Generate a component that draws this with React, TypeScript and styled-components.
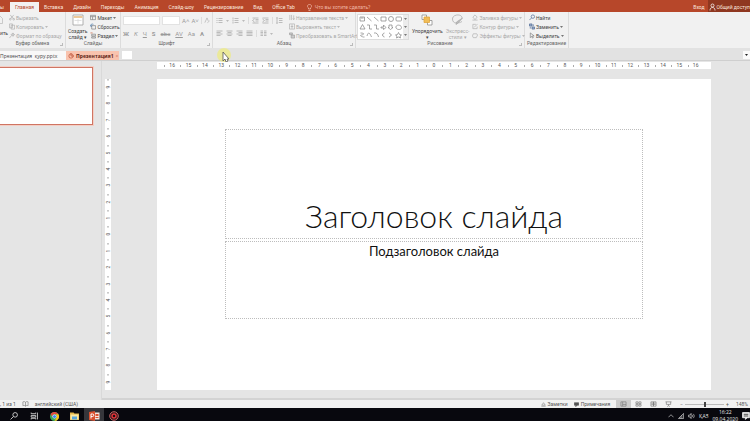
import React from "react";
import styled, { createGlobalStyle } from "styled-components";

const Global = createGlobalStyle`
  * { box-sizing: border-box; }
  html, body { margin: 0; height: 100%; overflow: hidden; }
  body { font-family: Roboto, "Open Sans", sans-serif; font-size: 5px; line-height: 8px; color: #444; }
  button, input, select { font: inherit; color: inherit; margin: 0; padding: 0; border: 0; background: none; border-radius: 0; appearance: none; }
  button { display: flex; align-items: center; white-space: nowrap; }
  svg { display: block; flex: none; }
`;

const Window = styled.div`
  display: flex;
  flex-direction: column;
  height: 100vh;
  overflow: hidden;
  background: #e5e5e5;
`;

/* ---------- Tab strip ---------- */
const TabStrip = styled.nav`
  display: flex;
  align-items: flex-end;
  height: 12px;
  background: #b7472a;
  color: #fbe6df;
  flex: none;
`;
const RibbonTab = styled.button<{ $active?: boolean }>`
  height: 10px;
  padding: 0 5px;
  background: ${(p) => (p.$active ? "#f3f1f0" : "transparent")};
  color: ${(p) => (p.$active ? "#b7472a" : "#fbe6df")};
`;
const FileTab = styled(RibbonTab)`
  width: 10px;
  padding: 0;
`;
const TellMe = styled(RibbonTab)`
  gap: 3px;
  margin-left: 2px;
  color: #efb5a4;
`;
const Account = styled.div`
  display: flex;
  align-items: stretch;
  height: 12px;
  margin-left: auto;
`;
const SignIn = styled.button`
  padding: 2px 3px 0;
`;
const Share = styled.button`
  min-width: 40px;
  gap: 1px;
  padding: 2px 0 0 1px;
  background: #8f3720;
`;

/* ---------- Ribbon ---------- */
const Ribbon = styled.div`
  display: flex;
  height: 36px;
  background: #f1f1f1;
  flex: none;
`;
const Group = styled.section<{ $w: number }>`
  display: flex;
  flex-direction: column;
  flex: none;
  width: ${(p) => p.$w}px;
  border-right: 1px solid #dcdcdc;
`;
const GroupBody = styled.div<{ $gap?: number; $pad?: number }>`
  display: flex;
  flex: 1;
  gap: ${(p) => p.$gap ?? 0}px;
  padding-left: ${(p) => p.$pad ?? 0}px;
`;
const GroupFooter = styled.div`
  position: relative;
  height: 8px;
  line-height: 7px;
  text-align: center;
  color: #666;
`;
const Launcher = styled.span`
  position: absolute;
  right: 2px;
  bottom: 2px;
  width: 3px;
  height: 3px;
  border: solid #bbb;
  border-width: 0 1px 1px 0;
`;
const Stack = styled.div`
  display: flex;
  flex-direction: column;
  padding-top: 1px;
`;
const Command = styled.button<{ $dim?: boolean }>`
  height: 9px;
  gap: 1px;
  color: ${(p) => (p.$dim ? "#a9a9a9" : "#444")};
`;
const BigCommand = styled.button<{ $dim?: boolean }>`
  flex-direction: column;
  justify-content: flex-start;
  gap: 2px;
  padding-top: 2px;
  line-height: 6px;
  white-space: pre-line;
  text-align: center;
  color: ${(p) => (p.$dim ? "#a9a9a9" : "#444")};
`;
const PasteEnd = styled(BigCommand)`
  width: 9px;
  align-items: flex-start;
`;
const Row = styled.div<{ $gap: number; $top?: number }>`
  display: flex;
  align-items: center;
  gap: ${(p) => p.$gap}px;
  height: 9px;
  margin-top: ${(p) => p.$top ?? 0}px;
`;
const FontSelect = styled.select<{ $w: number }>`
  width: ${(p) => p.$w}px;
  height: 9px;
  background: #fff;
  border: 1px solid #e2e2e2;
`;
const Glyph = styled.button<{ $b?: boolean; $i?: boolean; $u?: boolean; $s?: boolean }>`
  height: 9px;
  font-size: 6px;
  color: #9a9a9a;
  font-weight: ${(p) => (p.$b ? 700 : 400)};
  font-style: ${(p) => (p.$i ? "italic" : "normal")};
  text-decoration: ${(p) => (p.$u ? "underline" : p.$s ? "line-through" : "none")};
`;
const Divider = styled.span`
  width: 1px;
  height: 7px;
  background: #dcdcdc;
`;
const Gallery = styled.div`
  display: flex;
  width: 53px;
  height: 26px;
  margin-top: 2px;
  background: #fff;
  border: 1px solid #dcdcdc;
`;
const GalleryScroll = styled.div`
  display: flex;
  flex-direction: column;
  justify-content: space-around;
  align-items: center;
  width: 5px;
  margin-left: auto;
  background: #ececec;
`;

/* ---------- Document tabs ---------- */
const DocTabs = styled.div`
  display: flex;
  align-items: flex-end;
  height: 13px;
  background: #e2e2e2;
  border-bottom: 1px solid #cfcfcf;
  font-family: "Open Sans", sans-serif;
  flex: none;
`;
const DocTab = styled.button<{ $active?: boolean }>`
  height: 9px;
  width: ${(p) => (p.$active ? 53 : 66)}px;
  gap: 2px;
  padding-left: ${(p) => (p.$active ? 2 : 0)}px;
  font-weight: ${(p) => (p.$active ? 700 : 400)};
  background: ${(p) => (p.$active ? "#f9c3ae" : "#f8f8f8")};
  color: ${(p) => (p.$active ? "#5e2415" : "#444")};
`;
const CloseMark = styled.span`
  margin: 0 2px 0 auto;
  font-weight: 400;
  color: #d27055;
`;
const NewTab = styled.button`
  width: 10px;
  height: 8px;
  margin: 0 auto 1px 3px;
  background: #fff;
`;
const TabMenu = styled.button`
  width: 7px;
  height: 8px;
  margin-bottom: 1px;
  justify-content: center;
  background: #fafafa;
`;

/* ---------- Workspace ---------- */
const Workspace = styled.main`
  display: flex;
  flex: 1;
  min-height: 0;
`;
const ThumbPane = styled.aside`
  width: 102px;
  flex: none;
  padding-top: 6px;
  border-right: 1px solid #d9d9d9;
`;
const Thumb = styled.button`
  display: block;
  width: 93px;
  height: 58px;
  background: #fff;
  border: solid #cf7563;
  border-width: 1px 1px 1px 0;
  box-shadow: 0 0 0 1px #f3cfc5;
`;
const Canvas = styled.div`
  flex: 1;
  display: grid;
  grid-template-columns: 6px 46px 1fr 39px;
  grid-template-rows: 7px 10px 1fr 8px;
  padding: 1px 0 0 3px;
  border-bottom: 2px solid #d3d3d3;
`;
const HRuler = styled.div`
  grid-area: 1 / 3;
  display: flex;
  padding: 0 7px;
  background: #fff;
`;
const VRuler = styled.div`
  grid-area: 3 / 1;
  display: flex;
  flex-direction: column;
  background: #fff;
`;
const RulerCell = styled.span<{ $vertical?: boolean }>`
  flex: 1;
  display: flex;
  align-items: center;
  justify-content: center;
  line-height: 7px;
  color: #555;
  writing-mode: ${(p) => (p.$vertical ? "vertical-rl" : "horizontal-tb")};
  rotate: ${(p) => (p.$vertical ? "180deg" : "none")};
  background: linear-gradient(#aaa, #aaa) ${(p) => (p.$vertical ? "center bottom / 2px 1px" : "left center / 1px 2px")} no-repeat;
`;
const Slide = styled.article`
  grid-area: 3 / 3;
  display: grid;
  grid-template-columns: 68fr 418fr 68fr;
  grid-template-rows: 50fr 110fr 2fr 78fr 71fr;
  background: #fff;
  color: #111;
  font-family: Lato, "Open Sans", sans-serif;
`;
const TitleBox = styled.div`
  grid-area: 2 / 2;
  display: flex;
  align-items: flex-end;
  justify-content: center;
  border: 1px dotted #bdbdbd;
`;
const Title = styled.h1`
  margin: 0 0 3px;
  font-size: 32px;
  line-height: 38px;
  font-weight: 300;
  white-space: nowrap;
`;
const SubtitleBox = styled.div`
  grid-area: 4 / 2;
  border: 1px dotted #bdbdbd;
`;
const Subtitle = styled.p`
  margin: 1px 0 0;
  font-size: 13px;
  line-height: 16px;
  text-align: center;
`;

/* ---------- Status bar ---------- */
const StatusBar = styled.footer`
  display: flex;
  align-items: center;
  height: 8px;
  flex: none;
  background: #f1f1f1;
  color: #555;
`;
const StatusLeft = styled.div`
  display: flex;
  align-items: center;
  gap: 6px;
  margin-right: auto;
`;
const StatusButton = styled.button`
  height: 8px;
  gap: 2px;
  margin-right: 6px;
`;
const ZoomValue = styled.span`
  margin: 0 2px 0 4px;
`;
const ViewButton = styled.button<{ $active?: boolean }>`
  width: 15px;
  height: 8px;
  justify-content: center;
  background: ${(p) => (p.$active ? "#cbcbcb" : "transparent")};
`;
const Zoom = styled.label`
  display: flex;
  align-items: center;
  gap: 2px;
  margin: 0 3px 0 4px;
`;
const ZoomRange = styled.input`
  width: 39px;
  height: 6px;
  background: linear-gradient(#bbb, #bbb) center / 100% 1px no-repeat;
  &::-webkit-slider-thumb {
    appearance: none;
    width: 2px;
    height: 5px;
    background: #444;
  }
`;

/* ---------- Taskbar ---------- */
const Taskbar = styled.footer`
  display: flex;
  height: 13px;
  flex: none;
  overflow: hidden;
  background: #08080e;
  color: #e6e6e6;
  font-family: "Open Sans", sans-serif;
`;
const TaskButton = styled.button<{ $active?: boolean }>`
  width: 20px;
  height: 16px;
  justify-content: center;
  background: ${(p) => (p.$active ? "#36363b" : "transparent")};
`;
const TaskApps = styled.div`
  display: flex;
  padding-left: 4px;
  margin-right: auto;
`;
const Tray = styled.div`
  display: flex;
  align-items: center;
  gap: 4px;
  height: 16px;
`;
const Clock = styled.time`
  text-align: center;
  line-height: 7px;
  white-space: pre-line;
`;

/* ---------- Pointer ---------- */
const PointerHalo = styled.div`
  position: absolute;
  left: 217px;
  top: 48px;
  width: 14px;
  height: 14px;
  border-radius: 50%;
  background: #f1ee6b99;
  z-index: 3;
`;

/* ---------- Icons ---------- */
type IconProps = { w?: number; h?: number; box?: string; c?: string; children: React.ReactNode };
const Icon = ({ w = 7, h = 7, box = "0 0 14 14", c = "#777", children }: IconProps) => (
  <svg width={w} height={h} viewBox={box} fill="none" stroke={c} strokeWidth="1.5" aria-hidden="true">
    {children}
  </svg>
);
const Caret = ({ c = "#777" }: { c?: string }) => (
  <svg width="3" height="2" viewBox="0 0 6 4" aria-hidden="true"><path d="M0 0h6L3 4z" fill={c} /></svg>
);
const Lines = ({ d }: { d: string }) => <Icon c="#aaa"><path d={d} /></Icon>;

const hMarks = Array.from({ length: 33 }, (_, i) => Math.abs(i - 16));
const vMarks = Array.from({ length: 19 }, (_, i) => Math.abs(i - 9));
const tabs = ["Вставка", "Дизайн", "Переходы", "Анимация", "Слайд-шоу", "Рецензирование", "Вид", "Office Tab"];

export default function App() {
  return (
    <Window>
      <Global />
      <TabStrip>
        <FileTab>ы</FileTab>
        <RibbonTab $active>Главная</RibbonTab>
        {tabs.map((t) => <RibbonTab key={t}>{t}</RibbonTab>)}
        <TellMe>
          <Icon w={5} h={7} box="0 0 10 14" c="#f0b9a9"><path d="M3 10V8C0 6 0 1 5 1s5 5 2 7v2zM3 13h4" /></Icon>
          Что вы хотите сделать?
        </TellMe>
        <Account>
          <SignIn>Вход</SignIn>
          <Share>
            <Icon w={7} h={8} c="#fff"><circle cx="7" cy="4" r="3" /><path d="M2 14c0-4 2-6 5-6s5 2 5 6" /></Icon>
            Общий доступ
          </Share>
        </Account>
      </TabStrip>

      <Ribbon>
        <Group $w={66}>
          <GroupBody>
            <PasteEnd>
              <Icon w={4} h={14} box="0 0 8 28" c="#bbb"><path d="M0 4l5 5v10H0" /></Icon>
              ить
            </PasteEnd>
            <Stack>
              <Command $dim><Icon w={6} c="#aaa"><path d="M3 1l7 9M11 1L4 10" /><circle cx="3" cy="11" r="2" /><circle cx="11" cy="11" r="2" /></Icon>Вырезать</Command>
              <Command $dim><Icon w={6} c="#aaa"><path d="M1 1h7v9H1zM5 4h8v9H5z" /></Icon>Копировать <Caret c="#bbb" /></Command>
              <Command $dim><Icon w={6} c="#aaa"><path d="M1 13l5-6M5 5l4 4 4-4-4-4z" fill="#ccc" /></Icon>Формат по образцу</Command>
            </Stack>
          </GroupBody>
          <GroupFooter>Буфер обмена<Launcher /></GroupFooter>
        </Group>

        <Group $w={55}>
          <GroupBody $pad={2} $gap={3}>
            <BigCommand>
              <Icon w={12} h={12} box="0 0 24 24" c="#999"><path d="M2 2h20v20H2z" fill="#fff" /><path d="M3 4h18v4H3z" fill="#edc99a" stroke="none" /><path d="M5 13h14M12 10v9" stroke="#d8d8d8" /></Icon>
              <span>{"Создать\nслайд ▾"}</span>
            </BigCommand>
            <Stack>
              <Command><Icon w={6}><path d="M1 2h12v10H1zM1 5h12M6 5v7" /></Icon>Макет <Caret /></Command>
              <Command><Icon w={6}><path d="M4 5h9v8H4z" /><path d="M8 2C4 0 1 2 2 6M0 4l2 3 3-2" stroke="#3d6fa5" /></Icon>Сбросить</Command>
              <Command><Icon w={6}><path d="M4 4h9v4H4zM4 10h9v3H4z" /><path d="M1 1h5" stroke="#c9562f" /></Icon>Раздел <Caret /></Command>
            </Stack>
          </GroupBody>
          <GroupFooter>Слайды</GroupFooter>
        </Group>

        <Group $w={92}>
          <GroupBody $pad={2}>
            <Stack>
              <Row $gap={2} $top={3}>
                <FontSelect $w={37} aria-label="Шрифт"><option /></FontSelect>
                <FontSelect $w={18} aria-label="Размер шрифта"><option /></FontSelect>
                <Glyph>A˄</Glyph><Glyph>A˅</Glyph><Divider />
                <Icon w={6} c="#aaa"><path d="M2 12L7 1l3 7M8 12l5-4" /></Icon>
              </Row>
              <Row $gap={5} $top={4}>
                <Glyph $b>Ж</Glyph><Glyph $i>К</Glyph><Glyph $u>Ч</Glyph><Glyph $b>S</Glyph>
                <Glyph $s>abc</Glyph><Glyph $u>AV</Glyph><Glyph>Аа</Glyph><Glyph $b>А</Glyph>
              </Row>
            </Stack>
          </GroupBody>
          <GroupFooter>Шрифт<Launcher /></GroupFooter>
        </Group>

        <Group $w={143}>
          <GroupBody $pad={3} $gap={6}>
            <Stack>
              <Row $gap={3} $top={3}>
                <Lines d="M1 3h2M5 3h8M1 7h2M5 7h8M1 11h2M5 11h8" /><Caret c="#bbb" />
                <Lines d="M2 1v4M5 3h8M1 7h2M5 7h8M2 9v4M5 11h8" /><Caret c="#bbb" />
                <Divider />
                <Lines d="M1 2h12M7 5h6M7 8h6M1 12h12M5 4L1 7l4 3" />
                <Lines d="M1 2h12M7 5h6M7 8h6M1 12h12M1 4l4 3-4 3" />
                <Divider />
                <Lines d="M6 3h7M6 7h7M6 11h7M2 1v12M0 3l2-2 2 2M0 11l2 2 2-2" />
              </Row>
              <Row $gap={3} $top={4}>
                <Lines d="M1 2h12M1 5h8M1 8h12M1 11h8" />
                <Lines d="M1 2h12M3 5h8M1 8h12M3 11h8" />
                <Lines d="M1 2h12M5 5h8M1 8h12M5 11h8" />
                <Lines d="M1 2h12M1 5h12M1 8h12M1 11h12" />
                <Divider />
                <Lines d="M1 2h5M8 2h5M1 5h5M8 5h5M1 8h5M8 8h5M1 11h5M8 11h5" /><Caret c="#bbb" />
              </Row>
            </Stack>
            <Stack>
              <Command $dim><Icon w={6} c="#aaa"><path d="M2 1v12M6 1v12M9 9l2 3 2-3M11 2v10" /></Icon>Направление текста <Caret c="#bbb" /></Command>
              <Command $dim><Icon w={6} c="#aaa"><path d="M1 1h12v12H1zM7 2v10M4 7h6" /></Icon>Выровнять текст <Caret c="#bbb" /></Command>
              <Command $dim><Icon w={6} c="#999"><path d="M1 1h7v4H1zM5 6h8v7H5z" fill="#ccc" /></Icon>Преобразовать в SmartArt <Caret c="#bbb" /></Command>
            </Stack>
          </GroupBody>
          <GroupFooter>Абзац<Launcher /></GroupFooter>
        </Group>

        <Group $w={169}>
          <GroupBody $pad={1} $gap={3}>
            <Gallery>
              <Icon w={45} h={24} box="0 0 90 48" c="#888">
                <path d="M4 4h9v8H4zM6 6h5M18 4l9 8M32 4l9 8M46 4h10v8H46z" />
                <circle cx="66" cy="8" r="5" /><rect x="76" y="4" width="11" height="8" rx="2" />
                <path d="M4 28l5-9 5 9zM18 20h5v8h5M32 20h5v8h5M46 24h5v-4l5 5-5 4v-3h-5zM62 20v5h-2l5 4 5-4h-2v-5zM76 26c-2-7 10-8 11-1 1 4-8 6-11 1z" />
                <path d="M5 36c8 0 8 3 2 4s4 5 6 4M18 42c2-8 5-8 9 2M32 36c5-1 8 2 9 8M53 36c-4 0-2 4-5 4 3 0 1 4 5 4M62 36c4 0 2 4 5 4-3 0-1 4-5 4M81 35l2 4 4 1-3 2 1 4-4-2-4 2 1-4-3-2 4-1z" />
              </Icon>
              <GalleryScroll><Caret /><Caret /><Caret /></GalleryScroll>
            </Gallery>
            <BigCommand>
              <Icon w={12} h={12} box="0 0 24 24" c="#888"><path d="M2 2h9v9H2zM13 13h9v9h-9z" fill="#fff" /><path d="M6 6h11v11H6z" fill="#f0bd58" stroke="#e0a337" /></Icon>
              <span>{"Упорядочить\n▾"}</span>
            </BigCommand>
            <BigCommand $dim>
              <Icon w={13} h={12} box="0 0 26 24" c="#aaa"><path d="M22 8c0-9-19-8-19 2 0 11 13 9 19 5" /><path d="M23 8l-9 10-4 3 1-5z" fill="#bbb" /></Icon>
              <span>{"Экспресс-\nстили ▾"}</span>
            </BigCommand>
            <Stack>
              <Command $dim><Icon w={6} c="#aaa"><path d="M2 6l5-5 5 5-5 6zM1 13h12" /></Icon>Заливка фигуры <Caret c="#bbb" /></Command>
              <Command $dim><Icon w={6} c="#aaa"><path d="M9 2H2v10h10V7M5 9l8-8" /></Icon>Контур фигуры <Caret c="#bbb" /></Command>
              <Command $dim><Icon w={6} c="#aaa"><path d="M3 3h8l2 3-3 6H3L1 8z" /></Icon>Эффекты фигуры <Caret c="#bbb" /></Command>
            </Stack>
          </GroupBody>
          <GroupFooter>Рисование<Launcher /></GroupFooter>
        </Group>

        <Group $w={44}>
          <GroupBody $pad={4}>
            <Stack>
              <Command><Icon w={6} c="#44618f"><circle cx="9" cy="5" r="4" /><path d="M6 8l-5 5" /></Icon>Найти</Command>
              <Command><Icon w={6} c="#44618f"><path d="M1 1h6v5H1zM7 8h6v5H7zM10 2v4M3 8v4" fill="#9fb0cc" /></Icon>Заменить <Caret /></Command>
              <Command><Icon w={6}><path d="M3 1v11l3-3 2 4 2-1-2-4h4z" /></Icon>Выделить <Caret /></Command>
            </Stack>
          </GroupBody>
          <GroupFooter>Редактирование</GroupFooter>
        </Group>
      </Ribbon>

      <DocTabs>
        <DocTab>Презентация&nbsp; қуру.pptx</DocTab>
        <DocTab $active>
          <Icon w={6} h={6} c="#b7472a"><circle cx="7" cy="7" r="5" /><path d="M7 0v7h7" /></Icon>
          Презентация1
          <CloseMark>×</CloseMark>
        </DocTab>
        <NewTab aria-label="Новая вкладка" />
        <TabMenu aria-label="Список вкладок"><Caret c="#222" /></TabMenu>
      </DocTabs>

      <Workspace>
        <ThumbPane><Thumb aria-label="Слайд 1" /></ThumbPane>
        <Canvas>
          <HRuler>{hMarks.map((n, i) => <RulerCell key={i}>{n}</RulerCell>)}</HRuler>
          <VRuler>{vMarks.map((n, i) => <RulerCell key={i} $vertical>{n}</RulerCell>)}</VRuler>
          <Slide>
            <TitleBox><Title>Заголовок слайда</Title></TitleBox>
            <SubtitleBox><Subtitle>Подзаголовок слайда</Subtitle></SubtitleBox>
          </Slide>
        </Canvas>
      </Workspace>

      <StatusBar>
        <StatusLeft>
          <span>, 1 из 1</span>
          <Icon w={7} h={6}><path d="M7 3C5 1 3 1 1 2v9c2-1 4-1 6 1 2-2 4-2 6-1V2c-2-1-4-1-6 1v9" /></Icon>
          <span>английский (США)</span>
        </StatusLeft>
        <StatusButton><Icon w={5} h={5}><path d="M2 9l5-7 5 7zM1 12h12" /></Icon>Заметки</StatusButton>
        <StatusButton><Icon w={5} h={5} c="#444"><path d="M1 2h12v7H8l-3 4V9H1z" fill="#555" /></Icon>Примечания</StatusButton>
        <ViewButton $active aria-label="Обычный"><Icon h={6}><path d="M1 2h12v10H1zM5 2v10M5 8h8" /></Icon></ViewButton>
        <ViewButton aria-label="Сортировщик"><Icon h={6}><path d="M1 2h5v4H1zM8 2h5v4H8zM1 8h5v4H1zM8 8h5v4H8z" /></Icon></ViewButton>
        <ViewButton aria-label="Чтение"><Icon h={6}><path d="M1 2h6v10H1zM7 2h6v10H7zM2 5h10M2 8h10" /></Icon></ViewButton>
        <ViewButton aria-label="Показ слайдов"><Icon h={6}><path d="M0 2h14M2 2v6h10V2M7 8v3M4 13l3-2 3 2" /></Icon></ViewButton>
        <Zoom>
          −<ZoomRange type="range" min="10" max="190" defaultValue="100" aria-label="Масштаб" />+
        </Zoom>
        <ZoomValue>148%</ZoomValue>
      </StatusBar>

      <Taskbar>
        <TaskApps>
          <TaskButton aria-label="Поиск"><Icon w={8} h={8} c="#ddd"><circle cx="9" cy="5" r="4" /><path d="M6 8l-5 5" /></Icon></TaskButton>
          <TaskButton aria-label="Представление задач"><Icon w={8} h={8} c="#ddd"><path d="M2 1v2h8V1M2 6h8v3H2zM2 13v-2h8v2M13 1v12" /></Icon></TaskButton>
          <TaskButton aria-label="Chrome">
            <svg width="9" height="9" viewBox="0 0 20 20">
              <circle cx="10" cy="10" r="10" fill="#3aa757" />
              <path d="M1.3 5a10 10 0 0 1 17.4 0H10a5 5 0 0 0-4.4 7.4z" fill="#e8453c" />
              <path d="M18.7 5A10 10 0 0 1 10 20l4.4-7.5A5 5 0 0 0 13 6V5z" fill="#fbc116" />
              <circle cx="10" cy="10" r="4.6" fill="#fff" /><circle cx="10" cy="10" r="3.6" fill="#4285f4" />
            </svg>
          </TaskButton>
          <TaskButton aria-label="Проводник">
            <svg width="9" height="8" viewBox="0 0 18 16"><path d="M0 1h7l2 2h9v13H0z" fill="#e6b94a" /><path d="M1 5h16v10H1z" fill="#fbe9a4" /><path d="M4 9h10v6H4z" fill="#5aa7dc" /></svg>
          </TaskButton>
          <TaskButton $active aria-label="PowerPoint">
            <svg width="11" height="10" viewBox="0 0 22 20"><path d="M9 3h12v14H9z" fill="#fbe4dc" /><path d="M13 6h6v4h-6zM13 12h6v2h-6z" fill="#d8502f" /><path d="M0 2l12-2v20L0 18z" fill="#d8502f" /><path d="M4 15V6h3a2.500 2.500 0 0 1 0 5H4" fill="none" stroke="#fff" strokeWidth="2" /></svg>
          </TaskButton>
          <TaskButton aria-label="Запись">
            <svg width="10" height="10" viewBox="0 0 20 20"><circle cx="10" cy="10" r="8.500" fill="#1d0d10" stroke="#cf6a6c" strokeWidth="2" /><circle cx="10" cy="10" r="4" fill="none" stroke="#e0343a" strokeWidth="3" /></svg>
          </TaskButton>
        </TaskApps>
        <Tray>
          <Icon w={6} h={6} c="#ddd"><path d="M1 10l6-6 6 6" /></Icon>
          <Icon w={6} h={6} c="#ddd"><path d="M1 13h12V1zM5 13V9M9 13V5" /></Icon>
          <Icon w={7} h={6} c="#ddd"><path d="M0 5h3l3-4v12L3 9H0zM8 4c2 2 2 4 0 6M11 2c3 3 3 7 0 10" /></Icon>
          <span>ҚАЗ</span>
          <Clock>{"16:22\n09.04.2020"}</Clock>
          <Icon w={8} h={8} c="#eee"><path d="M1 1h12v9H9l-3 3v-3H1z" fill="#eee" /><path d="M3 4h8M3 7h8" stroke="#333" /></Icon>
        </Tray>
      </Taskbar>

      <PointerHalo>
        <svg width="12" height="14" viewBox="0 0 12 14" aria-hidden="true">
          <path d="M6 4v9l2-2 1 3 2-1-1-2h2z" fill="#fff" stroke="#555" strokeWidth="0.8" />
        </svg>
      </PointerHalo>
    </Window>
  );
}
